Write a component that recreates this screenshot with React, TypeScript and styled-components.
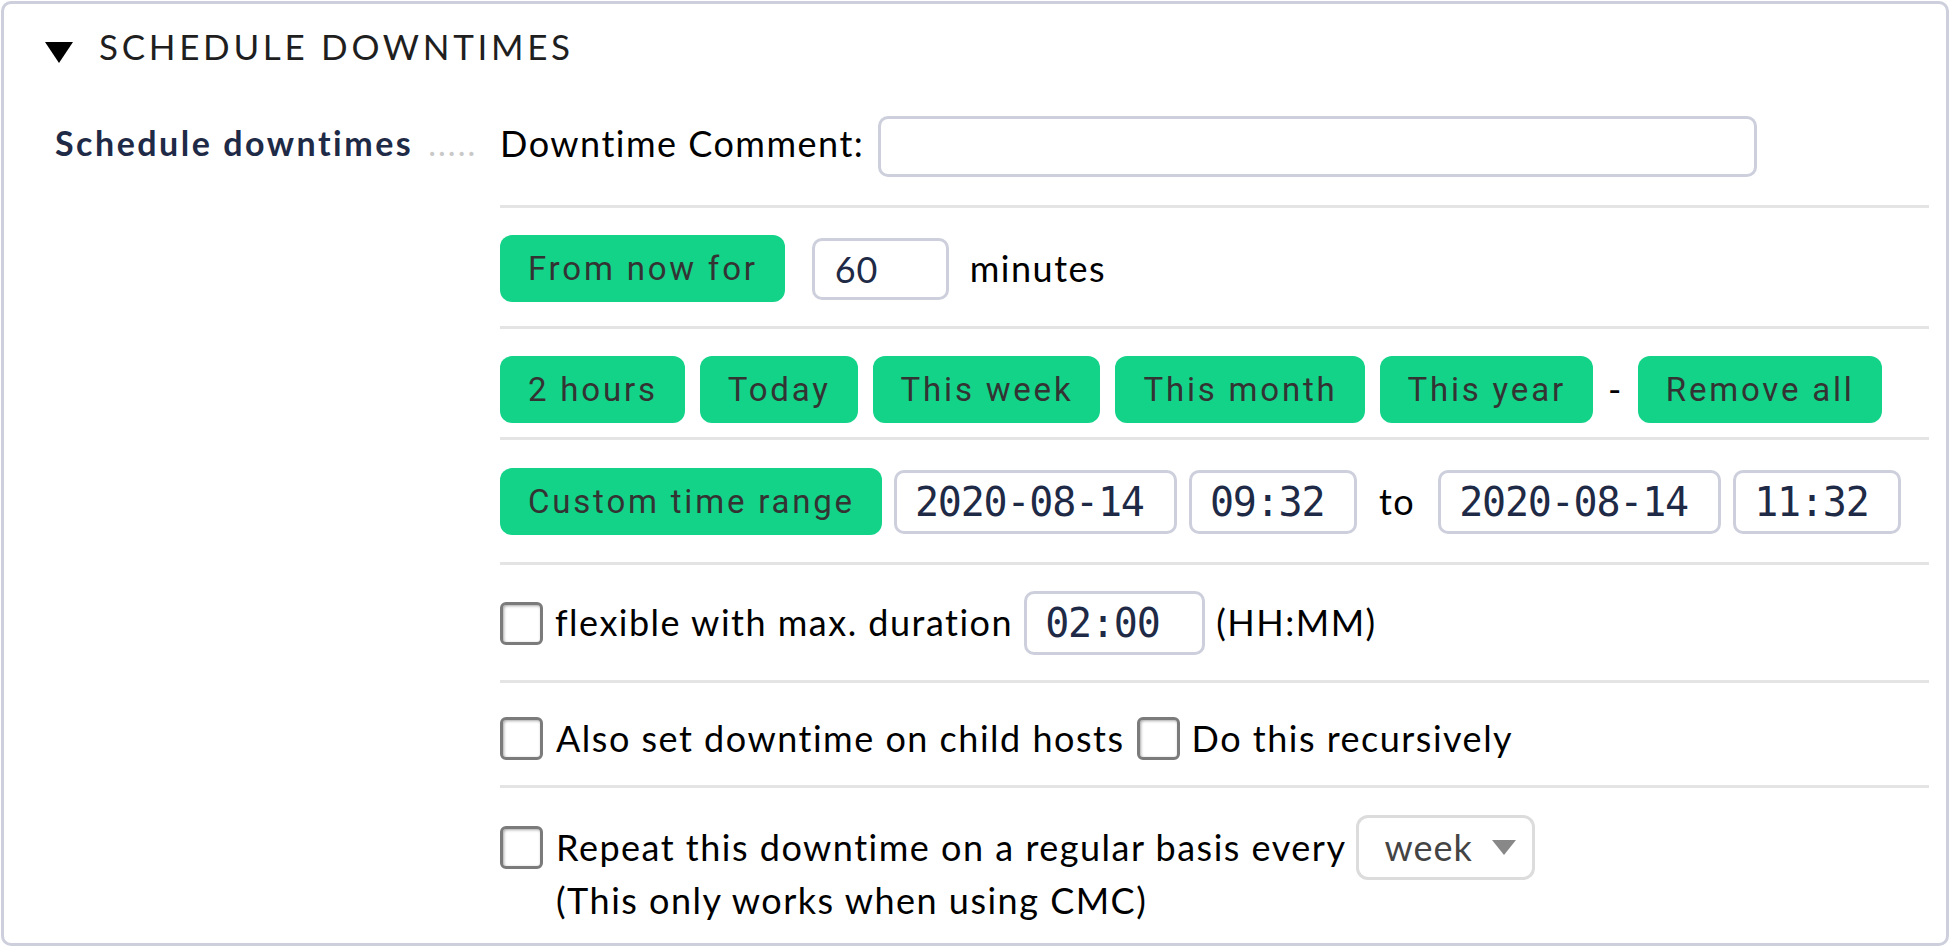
import React from "react";
import styled, { createGlobalStyle } from "styled-components";

const Global = createGlobalStyle`
  html, body { margin: 0; padding: 0; background: #fff; }
  body { font-family: Lato, "Liberation Sans", sans-serif; }
`;

const Box = styled.div`
  box-sizing: border-box;
  margin: 1px;
  height: 945px;
  border: 3px solid #cdd0dc;
  border-radius: 10px;
  background: #fff;
  padding: 0 17px 0 0;
`;

const Header = styled.div`
  display: flex;
  align-items: center;
  height: 84px;
  padding-left: 41px;
  gap: 26px;
`;

const Caret = styled.svg`
  flex: none;
  margin-top: 13px;
`;

const Title = styled.h2`
  margin: 0;
  font-family: Lato, sans-serif;
  font-weight: 400;
  font-size: 35px;
  letter-spacing: 3.7px;
  color: #1f1f1f;
  line-height: 1.2;
`;

const Form = styled.div`
  display: grid;
  grid-template-columns: 496px 1fr;
`;

const LabelCell = styled.div`
  display: flex;
  align-items: baseline;
  padding: 35px 0 0 51px;
  line-height: 40px;
`;

const Label = styled.span`
  font-weight: 700;
  font-size: 34px;
  letter-spacing: 2.5px;
  color: #1e2a46;
`;

const Dots = styled.span`
  margin-left: 15px;
  font-size: 33px;
  letter-spacing: 2px;
  color: #c8c8c8;
`;

const Values = styled.div`
  display: flex;
  flex-direction: column;
`;

const Row = styled.div<{ $pt: number; $pb: number; $gap?: number; $last?: boolean; $top?: boolean }>`
  display: flex;
  align-items: ${(p) => (p.$top ? "flex-start" : "center")};
  gap: ${(p) => p.$gap ?? 0}px;
  padding: ${(p) => p.$pt}px 0 ${(p) => p.$pb}px;
  border-bottom: ${(p) => (p.$last ? "none" : "3px solid #e4e4e4")};
  font-size: 36px;
  letter-spacing: 1.5px;
  line-height: 1.2;
  color: #000;
  white-space: nowrap;
`;

const Text = styled.span<{ $ml?: number; $mr?: number; $up?: number }>`
  margin-left: ${(p) => p.$ml ?? 0}px;
  margin-right: ${(p) => p.$mr ?? 0}px;
  margin-bottom: ${(p) => p.$up ?? 0}px;
`;

const Field = styled.input<{ $w: number; $h?: number; $mono?: boolean; $pl?: number; $ml?: number }>`
  box-sizing: border-box;
  flex: none;
  width: ${(p) => p.$w}px;
  height: ${(p) => p.$h ?? 64}px;
  margin: 0 0 0 ${(p) => p.$ml ?? 0}px;
  padding: 0 0 0 ${(p) => p.$pl ?? 18}px;
  border: 3px solid #cdd0dc;
  border-radius: 10px;
  background: #fff;
  outline: none;
  font-family: ${(p) => (p.$mono ? '"DejaVu Sans Mono", monospace' : "Lato, sans-serif")};
  font-size: ${(p) => (p.$mono ? 40 : 36)}px;
  letter-spacing: ${(p) => (p.$mono ? "-1.2px" : "1px")};
  color: #1e2a46;
`;

const Btn = styled.button<{ $ml?: number }>`
  flex: none;
  height: 67px;
  margin: 0 0 0 ${(p) => p.$ml ?? 0}px;
  padding: 0 27px 0 28px;
  border: none;
  border-radius: 12px;
  background: #13d389;
  font-family: Roboto, "Liberation Sans", sans-serif;
  font-size: 33px;
  letter-spacing: 2.8px;
  color: #333;
  cursor: pointer;
`;

const Check = styled.span<{ $mt?: number }>`
  box-sizing: border-box;
  flex: none;
  display: inline-block;
  width: 43px;
  height: 43px;
  margin-top: ${(p) => p.$mt ?? 0}px;
  border: 3px solid #7b7b7b;
  border-radius: 6px;
  background: #fff;
  box-shadow: inset 1px 1px 3px rgba(0, 0, 0, 0.35);
`;

const Stack = styled.div`
  display: flex;
  flex-direction: column;
  margin-left: 13px;
`;

const Line = styled.div`
  display: flex;
  align-items: center;
  height: 65px;
`;

const Note = styled.div`
  line-height: 40px;
`;

const Select = styled.div`
  box-sizing: border-box;
  display: inline-flex;
  align-items: center;
  gap: 19px;
  width: 179px;
  height: 65px;
  margin-left: 10px;
  padding-left: 25px;
  border: 3px solid #dcdcdc;
  border-radius: 12px;
  color: #444;
  letter-spacing: 1px;
`;

export default function App() {
  return (
    <>
      <Global />
      <Box>
        <Header>
          <Caret width="28" height="21" viewBox="0 0 28 21">
            <polygon points="0,0 28,0 14,21" fill="#000" />
          </Caret>
          <Title>SCHEDULE DOWNTIMES</Title>
        </Header>
        <Form>
          <LabelCell>
            <Label>Schedule downtimes</Label>
            <Dots>.....</Dots>
          </LabelCell>
          <Values>
            <Row $pt={28} $pb={28}>
              <Text $up={5}>Downtime Comment:</Text>
              <Field $w={879} $h={61} $ml={14} readOnly value="" />
            </Row>
            <Row $pt={27} $pb={24}>
              <Btn>From now for</Btn>
              <Field $w={137} $h={62} $ml={27} $pl={20} readOnly value="60" />
              <Text $ml={21}>minutes</Text>
            </Row>
            <Row $pt={27} $pb={14} $gap={15}>
              <Btn>2 hours</Btn>
              <Btn>Today</Btn>
              <Btn>This week</Btn>
              <Btn>This month</Btn>
              <Btn>This year</Btn>
              <Text>-</Text>
              <Btn>Remove all</Btn>
            </Row>
            <Row $pt={28} $pb={27} $gap={12}>
              <Btn>Custom time range</Btn>
              <Field $w={283} $mono readOnly value="2020-08-14" />
              <Field $w={168} $mono readOnly value="09:32" />
              <Text $ml={10} $mr={11}>to</Text>
              <Field $w={283} $mono readOnly value="2020-08-14" />
              <Field $w={168} $mono readOnly value="11:32" />
            </Row>
            <Row $pt={26} $pb={25} $gap={11}>
              <Check />
              <Text $ml={1}>flexible with max. duration</Text>
              <Field $w={181} $mono readOnly value="02:00" />
              <Text>(HH:MM)</Text>
            </Row>
            <Row $pt={34} $pb={25} $gap={12}>
              <Check />
              <Text $ml={1}>Also set downtime on child hosts</Text>
              <Check />
              <Text>Do this recursively</Text>
            </Row>
            <Row $pt={27} $pb={0} $last $top>
              <Check $mt={11} />
              <Stack>
                <Line>
                  <Text>Repeat this downtime on a regular basis every</Text>
                  <Select>
                    <span>week</span>
                    <svg width="24" height="15" viewBox="0 0 24 15">
                      <polygon points="0,0 24,0 12,15" fill="#888" />
                    </svg>
                  </Select>
                </Line>
                <Note>(This only works when using CMC)</Note>
              </Stack>
            </Row>
          </Values>
        </Form>
      </Box>
    </>
  );
}
